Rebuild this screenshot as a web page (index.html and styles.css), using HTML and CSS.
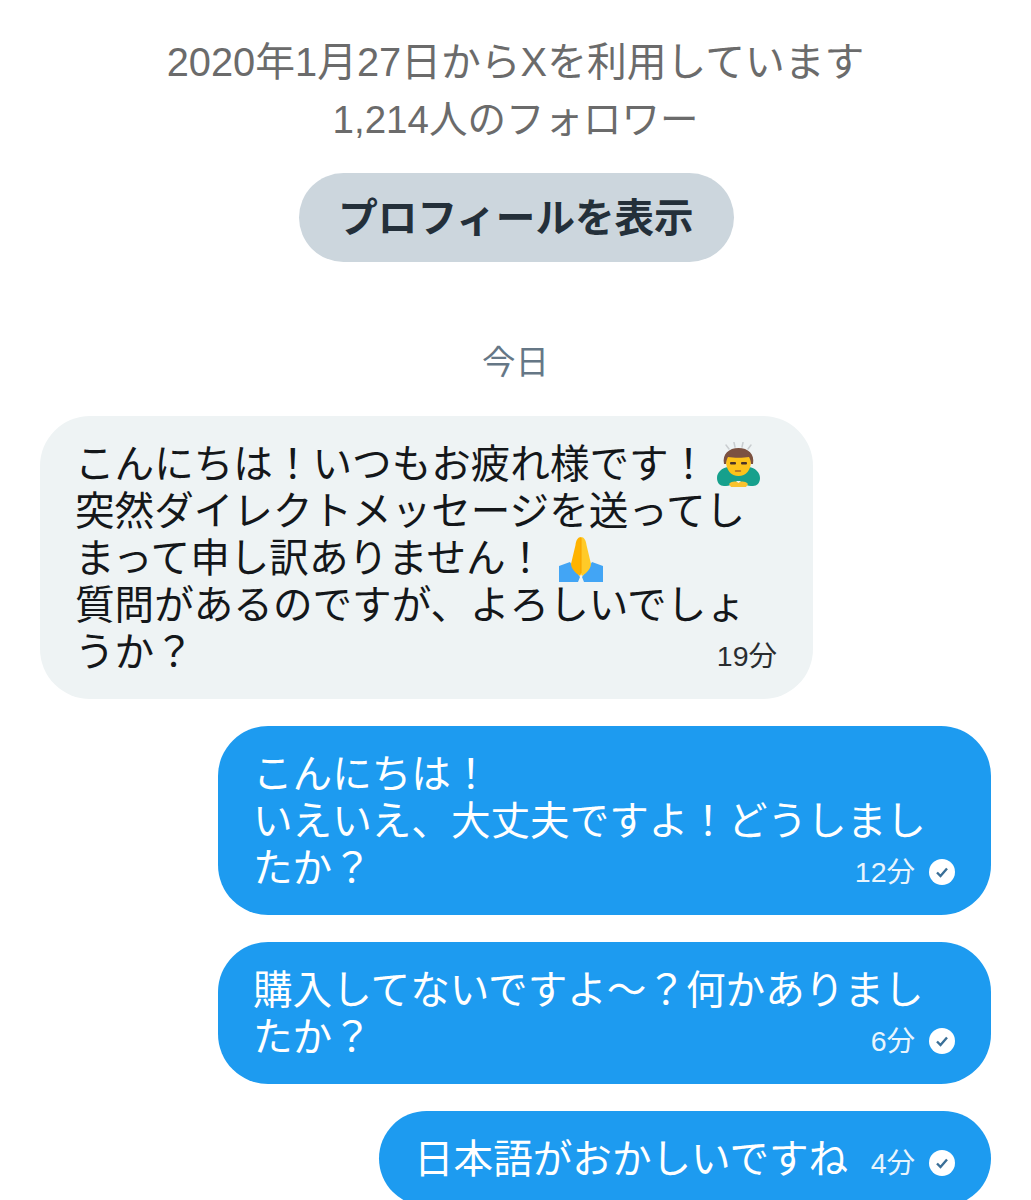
FILE: index.html
```html
<!DOCTYPE html>
<html lang="ja">
<head>
<meta charset="utf-8">
<title>メッセージ</title>
<link rel="stylesheet" href="styles.css">
</head>
<body>
<main class="page">
  <header class="profile">
    <p class="meta">2020年1月27日からXを利用しています</p>
    <p class="meta followers">1,214人のフォロワー</p>
    <button class="profile-btn" type="button">プロフィールを表示</button>
  </header>
  <div class="day">今日</div>
  <section class="thread">
    <div class="bubble in">
      <div class="line">こんにちは！いつもお疲れ様です！<svg class="emoji bow" viewBox="0 0 43 45" aria-hidden="true">
          <g stroke="#c9cdd0" stroke-width="1.500" stroke-linecap="round"><path d="M9 3 12 7"/><path d="M17 0.500 18 5"/><path d="M26 0.500 25 5"/><path d="M34 3 31 7"/></g>
          <path d="M0 36c0-6 5-10 11-11h21c6 1 11 5 11 11 0 5-3 8-7 8-6 0-10-2-13-5h-3c-3 3-7 5-13 5-4 0-7-3-7-8z" fill="#16a08c"/>
          <path d="M12 42c3-3 7-3 9.500-1 2.500-2 6.500-2 9.500 1l-2 3H14z" fill="#f9c22e"/>
          <path d="M9 19c0-7 5-11 12.500-11S34 12 34 19c0 9-5 15-12.500 15S9 28 9 19z" fill="#fcc21b"/>
          <path d="M7 22C5 12 12 6 21.500 6S38 12 36 22h-2c0-3-1-5-2-7-6 1-15 1-21 0-1 2-2 4-2 7z" fill="#7b5141"/>
          <rect x="13" y="20" width="6" height="2.500" rx="1" fill="#4a3328"/><rect x="24" y="20" width="6" height="2.500" rx="1" fill="#4a3328"/>
          <path d="M18.500 29h5" stroke="#a5662a" stroke-width="1.400" stroke-linecap="round"/>
        </svg></div>
      <div class="line">突然ダイレクトメッセージを送ってし</div>
      <div class="line">まって申し訳ありません！<svg class="emoji pray" viewBox="0 0 44 45" aria-hidden="true">
          <path d="M0 29 11 25 16 33 21 40 19 45H0z" fill="#42a5f5"/>
          <path d="M44 29 33 25 28 33 23 40 25 45H44z" fill="#42a5f5"/>
          <path d="M22 0c-3 0-5 3-5.500 8L12 27c0 3 2 6 5 9l4 3 1-2z" fill="#ffb300"/>
          <path d="M22 0c3 0 5 3 5.500 8L32 27c0 3-2 6-5 9l-4 3-1-2z" fill="#ffca28"/>
          <path d="M22 1v35" stroke="#f59f00" stroke-width="1"/>
        </svg></div>
      <div class="line">質問があるのですが、よろしいでしょ</div>
      <div class="line row"><span>うか？</span><span class="time">19分</span></div>
    </div>

    <div class="bubble out">
      <div class="line">こんにちは！</div>
      <div class="line">いえいえ、大丈夫ですよ！どうしまし</div>
      <div class="line row"><span>たか？</span>
        <span class="stamp"><span class="time">12分</span>
          <svg class="check" viewBox="0 0 26 26" aria-hidden="true"><circle cx="13" cy="13" r="13" fill="#fff"/><path d="M8 13.500 11.500 17 18 9.500" fill="none" stroke="#3a6f97" stroke-width="2.400"/></svg>
        </span>
      </div>
    </div>

    <div class="bubble out">
      <div class="line">購入してないですよ〜？何かありまし</div>
      <div class="line row"><span>たか？</span>
        <span class="stamp"><span class="time">6分</span>
          <svg class="check" viewBox="0 0 26 26" aria-hidden="true"><circle cx="13" cy="13" r="13" fill="#fff"/><path d="M8 13.500 11.500 17 18 9.500" fill="none" stroke="#3a6f97" stroke-width="2.400"/></svg>
        </span>
      </div>
    </div>

    <div class="bubble out short">
      <div class="line row"><span>日本語がおかしいですね</span>
        <span class="stamp"><span class="time">4分</span>
          <svg class="check" viewBox="0 0 26 26" aria-hidden="true"><circle cx="13" cy="13" r="13" fill="#fff"/><path d="M8 13.500 11.500 17 18 9.500" fill="none" stroke="#3a6f97" stroke-width="2.400"/></svg>
        </span>
      </div>
    </div>
  </section>
</main>
</body>
</html>
```
FILE: styles.css
```css
html, body {
  margin: 0;
  height: 1200px;
  overflow: hidden;
  background: #fff;
}
.page {
  font-family: "Liberation Sans", "Noto Sans CJK JP", sans-serif;
  color: #14171a;
}
.profile {
  display: flex;
  flex-direction: column;
  align-items: center;
  padding-top: 33px;
}
.meta {
  margin: 0;
  font-size: 39.800px;
  line-height: 58px;
  color: #6b6b6b;
}
.followers {
  font-size: 38.500px;
}
.profile-btn {
  margin: 24px 0 0 1px;
  padding: 0 0 6px;
  width: 435px;
  height: 89px;
  border: 0;
  border-radius: 45px;
  background: #ccd6dd;
  color: #24303a;
  font: 700 39.600px "Liberation Sans", "Noto Sans CJK JP", sans-serif;
}
.day {
  margin-top: 77px;
  text-align: center;
  font-size: 33.500px;
  line-height: 48px;
  color: #657786;
}
.thread {
  display: flex;
  flex-direction: column;
  gap: 27px;
  margin-top: 29px;
  padding: 0 40px;
}
.bubble {
  box-sizing: border-box;
  width: 773px;
  padding: 25px 36px 23px 35px;
  border-radius: 50px;
  font-size: 39.600px;
}
.in {
  background: #eef3f4;
  color: #14171a;
}
.out {
  align-self: flex-end;
  background: #1d9bf0;
  color: #fff;
}
.short {
  width: 612px;
}
.line {
  height: 47px;
  line-height: 47px;
  white-space: nowrap;
}
.row {
  display: flex;
  justify-content: space-between;
  align-items: flex-end;
}
.stamp {
  display: flex;
  align-items: center;
  gap: 14px;
}
.time {
  font-size: 28.500px;
  line-height: 40px;
  opacity: 0.9;
}
.check {
  width: 26px;
  height: 26px;
}
.emoji {
  vertical-align: middle;
  margin-block: -12px;
}
.bow {
  width: 43px;
  height: 45px;
  margin-left: 9px;
  margin-top: -18px;
}
.pray {
  width: 44px;
  height: 45px;
  margin-left: 14px;
  margin-top: -16px;
}
```
